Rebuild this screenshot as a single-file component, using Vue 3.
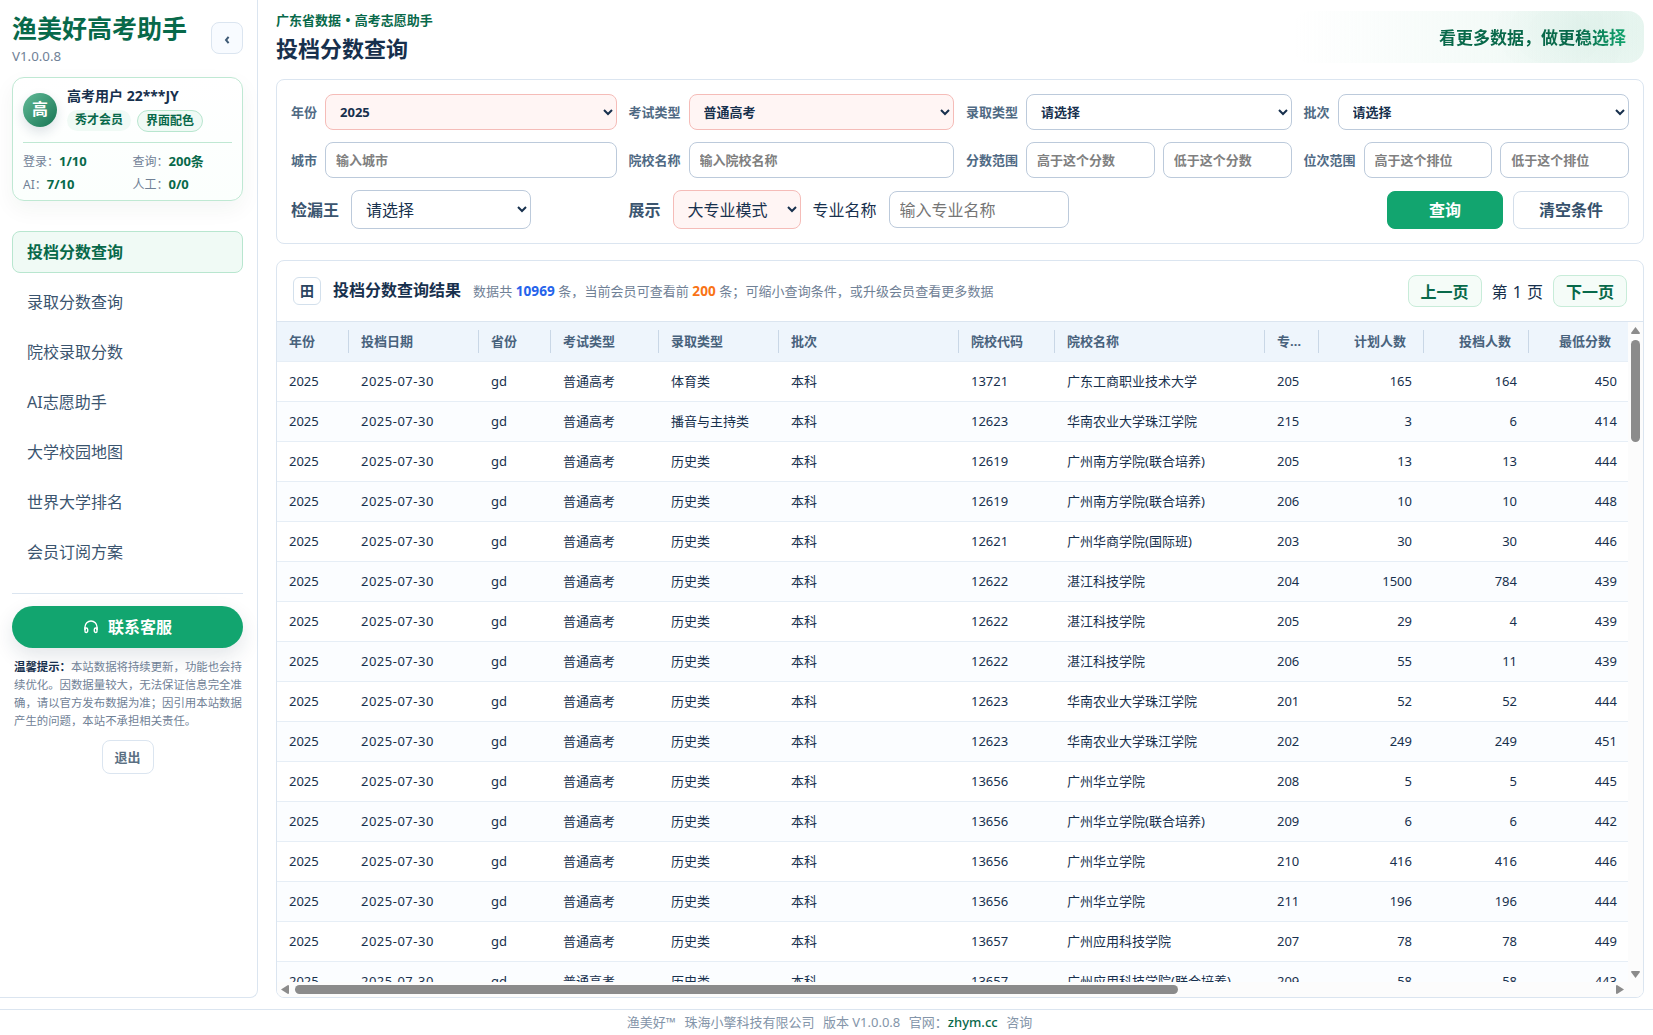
<template>
  <div class="app-shell">
    <div class="body">
      <aside class="sidebar">
        <div class="brand">
          <div>
            <div class="brand-name">渔美好高考助手</div>
            <div class="brand-version">V1.0.0.8</div>
          </div>
          <button class="collapse" aria-label="收起">
            <svg width="8" height="10" viewBox="0 0 8 10"><path d="M5.6 1.8 3 5l2.600 3.200" /></svg>
          </button>
        </div>

        <section class="user-card">
          <div class="user-top">
            <div class="avatar">高</div>
            <div>
              <div class="user-name">高考用户 22***JY</div>
              <div class="badges">
                <span class="badge">秀才会员</span>
                <span class="badge outlined">界面配色</span>
              </div>
            </div>
          </div>
          <div class="quota">
            <div v-for="q in quotas" :key="q.label">{{ q.label }}：<b>{{ q.value }}</b></div>
          </div>
        </section>

        <nav class="nav">
          <a v-for="(item, i) in menu" :key="item" class="nav-item" :class="{ active: i === 0 }">{{ item }}</a>
        </nav>

        <div class="side-bottom">
          <button class="service">
            <svg width="16" height="14" viewBox="0 0 16 14">
              <path d="M2 10V7a6 6 0 0 1 12 0v3" />
              <path d="M2 8h1.200a1.500 1.500 0 0 1 1.500 1.500V11a1.500 1.500 0 0 1-1.500 1.500A1.200 1.200 0 0 1 2 11.300z" />
              <path d="M14 8h-1.200a1.500 1.500 0 0 0-1.500 1.500V11a1.500 1.500 0 0 0 1.500 1.500 1.200 1.200 0 0 0 1.200-1.200z" />
            </svg>
            <span>联系客服</span>
          </button>
          <p class="tip"><b>温馨提示：</b>本站数据将持续更新，功能也会持续优化。因数据量较大，无法保证信息完全准确，请以官方发布数据为准；因引用本站数据产生的问题，本站不承担相关责任。</p>
          <button class="logout">退出</button>
        </div>
      </aside>

      <main class="main">
        <header class="page-head">
          <div>
            <div class="kicker">广东省数据 • 高考志愿助手</div>
            <h1>投档分数查询</h1>
          </div>
          <div class="slogan"><span>看更多数据，做更稳选择</span></div>
        </header>

        <section class="filters">
          <div class="field">
            <label>年份</label>
            <select class="picked"><option>2025</option></select>
          </div>
          <div class="field">
            <label>考试类型</label>
            <select class="picked"><option>普通高考</option></select>
          </div>
          <div class="field">
            <label>录取类型</label>
            <select><option>请选择</option></select>
          </div>
          <div class="field">
            <label>批次</label>
            <select><option>请选择</option></select>
          </div>
          <div class="field">
            <label>城市</label>
            <input placeholder="输入城市" />
          </div>
          <div class="field">
            <label>院校名称</label>
            <input placeholder="输入院校名称" />
          </div>
          <div class="field">
            <label>分数范围</label>
            <input placeholder="高于这个分数" />
            <input placeholder="低于这个分数" />
          </div>
          <div class="field">
            <label>位次范围</label>
            <input placeholder="高于这个排位" />
            <input placeholder="低于这个排位" />
          </div>
          <div class="field large">
            <label>检漏王</label>
            <select class="w180"><option>请选择</option></select>
          </div>
          <div class="field large span3">
            <label>展示</label>
            <select class="picked w128"><option>大专业模式</option></select>
            <span class="plain">专业名称</span>
            <input class="w180" placeholder="输入专业名称" />
            <div class="actions">
              <button class="btn primary">查询</button>
              <button class="btn">清空条件</button>
            </div>
          </div>
        </section>

        <section class="result">
          <div class="result-head">
            <span class="grid-icon">田</span>
            <h2>投档分数查询结果</h2>
            <span class="summary">数据共 <b class="blue">10969</b> 条，当前会员可查看前 <b class="orange">200</b> 条；可缩小查询条件，或升级会员查看更多数据</span>
            <div class="pager">
              <button>上一页</button>
              <span>第 1 页</span>
              <button>下一页</button>
            </div>
          </div>
          <div class="table-area">
            <div class="viewport">
              <table>
                <colgroup>
                  <col v-for="c in columns" :key="c.title" :style="{ width: c.width + 'px' }" />
                </colgroup>
                <thead>
                  <tr>
                    <th v-for="c in columns" :key="c.title" :class="{ num: c.num }"><div>{{ c.title }}</div></th>
                  </tr>
                </thead>
                <tbody>
                  <tr v-for="(row, r) in rows" :key="r">
                    <td v-for="(cell, i) in row" :key="i" :class="{ num: columns[i].num, date: i === 1 }">{{ cell }}</td>
                  </tr>
                </tbody>
              </table>
            </div>
            <div class="bar vertical">
              <svg width="9" height="7" viewBox="0 0 9 7"><path d="M4.500 0 9 6 8.500 7h-8L0 6z" /></svg>
              <i class="thumb"></i>
              <svg class="end" width="9" height="7" viewBox="0 0 9 7"><path d="M4.500 7 9 1 8.500 0h-8L0 1z" /></svg>
            </div>
            <div class="bar horizontal">
              <svg width="8" height="9" viewBox="0 0 8 9"><path d="M0 4.500 7 0l1 .5v8L7 9z" /></svg>
              <i class="thumb"></i>
              <svg class="end" width="8" height="9" viewBox="0 0 8 9"><path d="M8 4.500 1 0 0 .5v8L1 9z" /></svg>
            </div>
            <div class="corner"></div>
          </div>
        </section>
      </main>
    </div>

    <footer class="footer">
      <span>渔美好™</span>
      <span>珠海小擎科技有限公司</span>
      <span>版本 V1.0.0.8</span>
      <span>官网：<a>zhym.cc</a></span>
      <span>咨询</span>
    </footer>
  </div>
</template>

<script setup>
const quotas = [
  { label: "登录", value: "1/10" },
  { label: "查询", value: "200条" },
  { label: "AI", value: "7/10" },
  { label: "人工", value: "0/0" },
];

const menu = [
  "投档分数查询",
  "录取分数查询",
  "院校录取分数",
  "AI志愿助手",
  "大学校园地图",
  "世界大学排名",
  "会员订阅方案",
];

const columns = [
  { title: "年份", width: 72 },
  { title: "投档日期", width: 130 },
  { title: "省份", width: 72 },
  { title: "考试类型", width: 108 },
  { title: "录取类型", width: 120 },
  { title: "批次", width: 180 },
  { title: "院校代码", width: 96 },
  { title: "院校名称", width: 210 },
  { title: "专业组", width: 54 },
  { title: "计划人数", width: 105, num: true },
  { title: "投档人数", width: 105, num: true },
  { title: "最低分数", width: 100, num: true },
];

const base = (type, ...rest) => ["2025", "2025-07-30", "gd", "普通高考", type, "本科", ...rest];

const rows = [
  base("体育类", "13721", "广东工商职业技术大学", "205", 165, 164, 450),
  base("播音与主持类", "12623", "华南农业大学珠江学院", "215", 3, 6, 414),
  base("历史类", "12619", "广州南方学院(联合培养)", "205", 13, 13, 444),
  base("历史类", "12619", "广州南方学院(联合培养)", "206", 10, 10, 448),
  base("历史类", "12621", "广州华商学院(国际班)", "203", 30, 30, 446),
  base("历史类", "12622", "湛江科技学院", "204", 1500, 784, 439),
  base("历史类", "12622", "湛江科技学院", "205", 29, 4, 439),
  base("历史类", "12622", "湛江科技学院", "206", 55, 11, 439),
  base("历史类", "12623", "华南农业大学珠江学院", "201", 52, 52, 444),
  base("历史类", "12623", "华南农业大学珠江学院", "202", 249, 249, 451),
  base("历史类", "13656", "广州华立学院", "208", 5, 5, 445),
  base("历史类", "13656", "广州华立学院(联合培养)", "209", 6, 6, 442),
  base("历史类", "13656", "广州华立学院", "210", 416, 416, 446),
  base("历史类", "13656", "广州华立学院", "211", 196, 196, 444),
  base("历史类", "13657", "广州应用科技学院", "207", 78, 78, 449),
  base("历史类", "13657", "广州应用科技学院(联合培养)", "209", 58, 58, 443),
];
</script>

<style>
body {
  margin: 0;
  background: #fff;
}
</style>

<style scoped>
* {
  box-sizing: border-box;
}

.app-shell {
  display: flex;
  flex-direction: column;
  height: 100vh;
  overflow: hidden;
  color: #17304d;
  font-family: "Noto Sans", "Noto Sans CJK SC", sans-serif;
  font-size: 13px;
}

button,
input,
select {
  font-family: inherit;
  color: inherit;
  margin: 0;
}

button {
  padding: 0 0 2px;
}

.body {
  display: flex;
  height: 1009px;
  flex: none;
}

/* sidebar */
.sidebar {
  width: 258px;
  height: 998px;
  flex: none;
  padding: 0 14px 0 12px;
  border-right: 1px solid #dbe5f0;
  border-bottom: 1px solid #dbe5f0;
  border-bottom-right-radius: 8px;
}

.brand {
  display: flex;
  justify-content: space-between;
  height: 77px;
}

.brand-name {
  margin-top: 12px;
  font-size: 25px;
  line-height: 32px;
  font-weight: 700;
  color: #08694a;
}

.brand-version {
  margin-top: 2px;
  font-size: 13.300px;
  line-height: 20px;
  color: #708196;
}

.collapse {
  display: flex;
  align-items: center;
  justify-content: center;
  width: 32px;
  height: 32px;
  margin-top: 22px;
  padding: 3px 0 0;
  border: 1px solid #dbe5f0;
  border-radius: 8px;
  background: #f8fbff;
}

.collapse svg {
  fill: none;
  stroke: #3f5b76;
  stroke-width: 2;
}

.user-card {
  height: 124px;
  padding: 10px;
  border: 1px solid #bfe8d3;
  border-radius: 12px;
  background: linear-gradient(180deg, #fff, #fbfffd);
  box-shadow: 0 8px 22px rgba(15, 50, 40, 0.05);
}

.user-top {
  display: flex;
  align-items: flex-start;
  gap: 10px;
  height: 55px;
  border-bottom: 1px solid #bfe8d3;
}

.avatar {
  width: 34px;
  height: 34px;
  margin-top: 5px;
  border-radius: 50%;
  background: linear-gradient(135deg, #62ba97, #177553);
  box-shadow: 0 5px 12px rgba(23, 48, 77, 0.14);
  color: #fff;
  font-size: 16px;
  line-height: 33px;
  font-weight: 700;
  text-align: center;
}

.user-name {
  margin-top: -2px;
  font-size: 14px;
  line-height: 20px;
  font-weight: 700;
  white-space: nowrap;
}

.badges {
  display: flex;
  gap: 6px;
  margin-top: 4px;
}

.badge {
  height: 21px;
  padding: 0 8px;
  border-radius: 11px;
  background: #f0faf5;
  color: #08694a;
  font-size: 12px;
  line-height: 20px;
  font-weight: 700;
}

.badge.outlined {
  height: 22px;
  border: 1px solid #b8e6cf;
}

.quota {
  display: grid;
  grid-template-columns: 1fr 1fr;
  column-gap: 10px;
  padding-top: 7px;
  color: #708196;
  font-size: 12px;
  line-height: 22px;
}

.quota b {
  color: #08694a;
  font-size: 13px;
}

.nav {
  display: flex;
  flex-direction: column;
  gap: 8px;
  margin-top: 30px;
}

.nav-item {
  height: 42px;
  padding-left: 14px;
  border: 1px solid transparent;
  border-radius: 8px;
  color: #3b556f;
  font-size: 16px;
  line-height: 41px;
}

.nav-item.active {
  border-color: #b8e6cf;
  background: #f0faf5;
  color: #08694a;
  font-weight: 700;
}

.side-bottom {
  display: flex;
  flex-direction: column;
  align-items: center;
  margin-top: 20px;
  padding-top: 12px;
  border-top: 1px solid #dbe5f0;
}

.service {
  display: flex;
  align-items: center;
  justify-content: center;
  gap: 9px;
  width: 100%;
  height: 42px;
  border: 0;
  border-radius: 21px;
  background: #12a56f;
  box-shadow: 0 8px 20px rgba(23, 48, 77, 0.12);
  color: #fff;
  font-size: 16px;
  font-weight: 700;
}

.service svg {
  margin-top: 2px;
  fill: none;
  stroke: #fff;
  stroke-width: 1.4;
}

.tip {
  align-self: flex-end;
  width: 229px;
  margin: 10px 0 10px;
  color: #708196;
  font-size: 11.4px;
  line-height: 18px;
}

.tip b {
  color: #17304d;
}

.logout {
  width: 52px;
  height: 34px;
  border: 1px solid #dbe5f0;
  border-radius: 8px;
  background: #fff;
  color: #5b7083;
  font-size: 13px;
  font-weight: 600;
}

/* main column */
.main {
  display: flex;
  flex-direction: column;
  width: 1368px;
  height: 998px;
  margin-left: 18px;
}

.page-head {
  display: flex;
  justify-content: space-between;
  height: 79px;
  flex: none;
}

.kicker {
  margin-top: 10px;
  color: #08694a;
  font-size: 13px;
  line-height: 20px;
  font-weight: 700;
  word-spacing: 1px;
}

h1 {
  margin: 3px 0 0;
  font-size: 22px;
  line-height: 30px;
  font-weight: 700;
}

.slogan {
  width: 350px;
  height: 52px;
  margin-top: 11px;
  padding-right: 18px;
  border-radius: 16px;
  background:
    radial-gradient(ellipse 90px 60px at 82% 35%, rgba(18, 140, 100, 0.07), transparent),
    linear-gradient(90deg, rgba(232, 246, 240, 0), #ebf7f2);
  text-align: right;
  line-height: 54px;
}

.slogan span {
  background: linear-gradient(90deg, #08694a 75%, #12a56f);
  -webkit-background-clip: text;
  background-clip: text;
  color: transparent;
  font-size: 17px;
  font-weight: 700;
}

.filters {
  display: grid;
  grid-template-columns: repeat(4, minmax(0, 1fr));
  grid-template-rows: 36px 36px 39px;
  gap: 12px;
  height: 165px;
  flex: none;
  padding: 14px;
  border: 1px solid #dbe5f0;
  border-radius: 8px;
}

.field {
  display: flex;
  align-items: center;
  gap: 8px;
  min-width: 0;
}

.field label {
  flex: none;
  padding-bottom: 1px;
  color: #506a84;
  font-weight: 600;
}

.field select,
.field input {
  flex: 1;
  min-width: 0;
  width: 0;
  height: 36px;
  padding: 0 10px;
  border: 1px solid #bccadb;
  border-radius: 8px;
  background: #fff;
  font-size: 13px;
  outline: none;
}

.field select {
  font-weight: 700;
}

.field input::placeholder {
  color: #808080;
  font-weight: 600;
}

.field select.picked {
  border-color: #f5bcb8;
  background: #fff5f4;
}

.field.large {
  gap: 12px;
  font-size: 16px;
}

.field.large label {
  padding-bottom: 2px;
  color: #3b556f;
}

.plain {
  padding-bottom: 2px;
}

.field.large select,
.field.large input {
  flex: none;
  height: 39px;
  font-size: 16px;
  font-weight: 400;
}

.field.large input {
  height: 37px;
}

.field.large input::placeholder {
  font-weight: 400;
  color: #757575;
}

.field.large .w180 {
  width: 180px;
}

.field.large .w128 {
  width: 128px;
}

.span3 {
  grid-column: span 3;
}

.actions {
  display: flex;
  gap: 10px;
  margin-left: auto;
}

.btn {
  width: 116px;
  height: 38px;
  border: 1px solid #d3deea;
  border-radius: 8px;
  background: #fff;
  color: #36516c;
  font-size: 16px;
  font-weight: 600;
}

.btn.primary {
  border-color: #12a56f;
  background: #12a56f;
  color: #fff;
}

.result {
  display: flex;
  flex-direction: column;
  flex: 1;
  min-height: 0;
  margin-top: 16px;
  border: 1px solid #dbe5f0;
  border-radius: 8px;
  overflow: hidden;
}

.result-head {
  display: flex;
  align-items: center;
  height: 61px;
  flex: none;
  padding: 0 16px;
  border-bottom: 1px solid #dbe5f0;
}

.grid-icon {
  width: 28px;
  height: 28px;
  border: 1px solid #d3e0ec;
  border-radius: 6px;
  color: #2b4560;
  font-size: 14px;
  line-height: 25px;
  font-weight: 600;
  text-align: center;
}

h2 {
  margin: 0 12px;
  padding-bottom: 2px;
  font-size: 16px;
  line-height: 24px;
  font-weight: 700;
}

.summary {
  padding-bottom: 2px;
  color: #708196;
  letter-spacing: 0.060px;
}

.summary b {
  font-size: 13.600px;
}

.blue {
  color: #2563eb;
}

.orange {
  color: #f97316;
}

.pager {
  display: flex;
  align-items: center;
  gap: 10px;
  margin-left: auto;
  font-size: 16px;
}

.pager span {
  width: 51.500px;
  text-align: center;
  white-space: nowrap;
  word-spacing: 1px;
}

.pager button {
  width: 74px;
  height: 32px;
  padding-bottom: 0;
  border: 1px solid #c8ecd9;
  border-radius: 8px;
  background: #f5fcf8;
  color: #08694a;
  font-size: 16px;
  font-weight: 700;
}

.table-area {
  display: grid;
  grid-template-columns: minmax(0, 1fr) 15px;
  grid-template-rows: minmax(0, 1fr) 15px;
  flex: 1;
  min-height: 0;
}

.viewport {
  overflow: hidden;
}

table {
  width: 1352px;
  border-collapse: separate;
  border-spacing: 0;
  table-layout: fixed;
}

th,
td {
  height: 40px;
  padding: 0 12px 2px;
  border-bottom: 1px solid #e6eef6;
  text-align: left;
  font-size: 13px;
  line-height: 20px;
  white-space: nowrap;
}

th {
  padding: 0;
  background: #eef5fc;
  color: #48627c;
  font-weight: 700;
}

th div {
  height: 23px;
  padding: 0 12px;
  border-right: 1px solid #c9d7e6;
  line-height: 23px;
  overflow: hidden;
  text-overflow: ellipsis;
}

th.num div {
  padding-right: 17px;
}

th:last-child div {
  border-right-color: transparent;
}

.num {
  text-align: right;
}

.date {
  letter-spacing: 0.500px;
}

tbody tr:nth-child(even) td {
  background: #fbfdff;
}

.bar {
  display: flex;
  align-items: center;
  background: #fcfcfc;
}

.bar svg {
  flex: none;
  fill: #8b8b8b;
}

.bar .end {
  margin: auto 0 0;
}

.thumb {
  border-radius: 5px;
  background: #8b8b8b;
}

.vertical {
  flex-direction: column;
  padding: 5px 0 4px;
}

.vertical .thumb {
  width: 9px;
  height: 102px;
  margin-top: 6px;
}

.horizontal {
  padding: 0 4px;
}

.horizontal .thumb {
  width: 883px;
  height: 9px;
  margin-left: 6px;
}

.horizontal .end {
  margin: 0 0 0 auto;
}

.corner {
  background: #fcfcfc;
}

.footer {
  display: flex;
  justify-content: center;
  gap: 8.500px;
  height: 26px;
  padding-left: 6px;
  border-top: 1px solid #dbe5f0;
  color: #8495a9;
  font-size: 13px;
  line-height: 25px;
}

.footer a {
  color: #08694a;
  font-weight: 500;
}
</style>
